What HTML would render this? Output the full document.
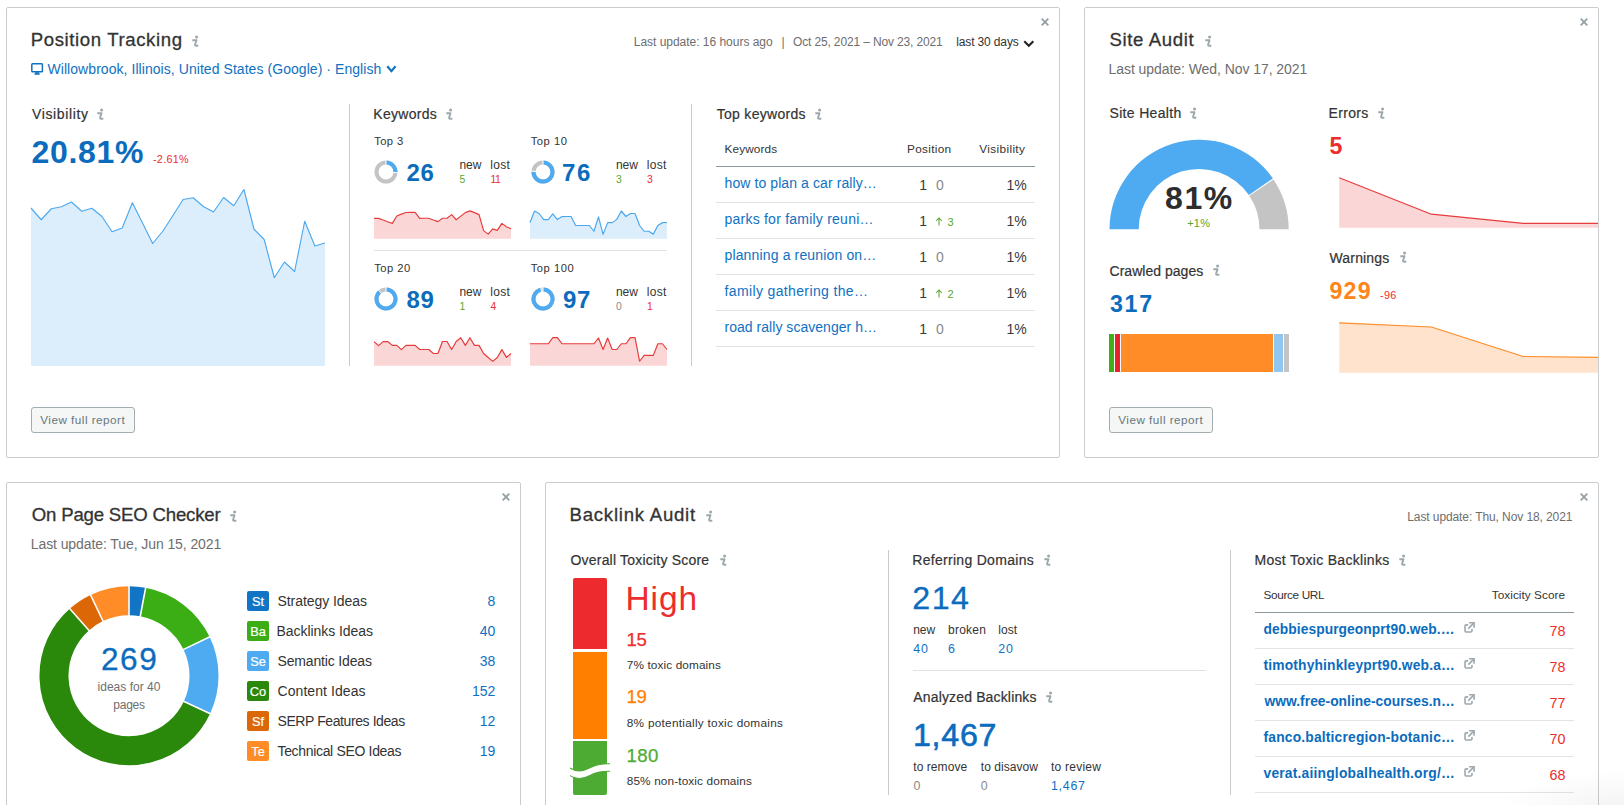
<!DOCTYPE html>
<html lang="en">
<head>
<meta charset="utf-8">
<title>Projects Dashboard</title>
<style>
*{box-sizing:content-box;margin:0;padding:0}
html,body{width:1624px;height:805px;overflow:hidden;background:#fff}
body{font-family:"Liberation Sans",Arial,sans-serif;color:#333;font-size:14px}
.dash{position:relative;width:1624px;height:805px;overflow:hidden}
.card{position:absolute;border:1px solid #cbcccd;border-radius:2px;background:#fff;overflow:hidden}
.card>*{position:absolute}
.t{display:block;white-space:nowrap;line-height:1;font-weight:400}
a.t{text-decoration:none}
h2.t,h3.t{font-weight:400}
svg{display:block;overflow:visible}
.btn{box-sizing:border-box;border:1px solid #a3adb1;border-radius:3px;background:#f5f7f7}
.vdiv{background:#c6cbce}
.hdiv{background:#dde2e5}
.thl{background:#8c979c}
.trl{background:#dfe4e7}
.badge{border-radius:2px}
.fab-shadow{position:absolute;left:1500px;top:770px;width:124px;height:35px;background:radial-gradient(ellipse at 100% 100%,rgba(0,0,0,.045),rgba(0,0,0,0) 70%);pointer-events:none}

</style>
</head>
<body>
<main class="dash">
<section class="card" id="pt" style="left:6px;top:7px;width:1052px;height:449px">
<h2 class="t" style="left:23.75px;top:21px;line-height:21px;font-size:18.6px;letter-spacing:0.604px;-webkit-text-stroke:0.3px currentColor;">Position Tracking</h2>
<svg class="ico info" style="left:185px;top:26.5px" width="8" height="13" viewBox="0 0 8 13"><circle cx="4.6" cy="1.95" r="1.55" fill="#9da8ad"/><path d="M0.3 5.2 H4.5 L3.1 9.5 Q2.8 10.8 4.2 10.8 H6.3" fill="none" stroke="#9da8ad" stroke-width="1.9" stroke-linejoin="round"/></svg>
<svg class="ico" style="left:24px;top:55px" width="13" height="13" viewBox="0 0 13 13"><rect x="0.8" y="0.8" width="10.6" height="8" rx="0.8" fill="#fff" stroke="#1071c2" stroke-width="1.5"/><path d="M4.2 9.2 h3.8 l0.9 2.6 h-5.6z" fill="#1071c2"/></svg>
<a class="t" style="left:40.50px;top:53px;line-height:16px;font-size:14px;color:#1071c2;letter-spacing:0.057px;">Willowbrook, Illinois, United States (Google) · English</a>
<svg class="ico chev" style="left:378.8px;top:57.4px" width="10.8" height="7.8" viewBox="0 0 10.8 7.8"><path d="M1.26 1.26 L5.4 6.225 L9.54 1.26" stroke="#1071c2" stroke-width="2.1" fill="none"/></svg>
<span class="t" style="left:626.75px;top:27px;line-height:14px;font-size:12px;color:#6e6e6e;letter-spacing:-0.022px;">Last update: 16 hours ago</span>
<span class="t" style="left:774.50px;top:27px;line-height:14px;font-size:12px;color:#6e6e6e;">|</span>
<span class="t" style="left:786.00px;top:27px;line-height:14px;font-size:12px;color:#6e6e6e;letter-spacing:-0.145px;">Oct 25, 2021 – Nov 23, 2021</span>
<span class="t" style="left:949.25px;top:27px;line-height:14px;font-size:12px;letter-spacing:-0.140px;">last 30 days</span>
<svg class="ico chev" style="left:1015.6px;top:31.9px" width="11.6" height="7.4" viewBox="0 0 11.6 7.4"><path d="M1.26 1.26 L5.8 5.825 L10.34 1.26" stroke="#222" stroke-width="2.1" fill="none"/></svg>
<svg class="ico close" style="left:1034px;top:10px" width="8" height="8" viewBox="0 0 8 8"><path d="M0.7 0.7 L7.3 7.3 M7.3 0.7 L0.7 7.3" stroke="#939fa5" stroke-width="1.8" fill="none"/></svg>
<h3 class="t" style="left:25.00px;top:98px;line-height:16px;font-size:14px;letter-spacing:0.632px;-webkit-text-stroke:0.2px currentColor;">Visibility</h3>
<svg class="ico info" style="left:90.2px;top:99.7px" width="8" height="13" viewBox="0 0 8 13"><circle cx="4.6" cy="1.95" r="1.55" fill="#9da8ad"/><path d="M0.3 5.2 H4.5 L3.1 9.5 Q2.8 10.8 4.2 10.8 H6.3" fill="none" stroke="#9da8ad" stroke-width="1.9" stroke-linejoin="round"/></svg>
<span class="t" style="left:24.50px;top:126px;line-height:36px;font-size:32px;font-weight:700;color:#0b6cbd;letter-spacing:0.684px;">20.81%</span>
<span class="t" style="left:146.00px;top:145px;line-height:12px;font-size:10.8px;color:#ed2d2d;letter-spacing:0.278px;">-2.61%</span>
<svg class="chart" style="left:24px;top:179px" width="294" height="179" viewBox="0 0 294 179"><polygon points="0.00,179.00 0.00,21.00 10.14,32.75 20.28,21.75 30.41,19.75 40.55,15.00 50.69,24.25 60.83,21.25 70.97,29.50 81.10,44.75 91.24,41.00 101.38,15.75 111.52,36.00 121.66,56.50 131.79,44.25 141.93,28.50 152.07,12.50 162.21,10.75 172.34,19.50 182.48,25.00 192.62,10.50 202.76,18.75 212.90,2.50 223.03,42.25 233.17,52.50 243.31,90.75 253.45,75.00 263.59,84.50 273.72,34.25 283.86,59.00 294.00,56.00 294.00,179.00" fill="#dceefc"/><polyline points="0.00,21.00 10.14,32.75 20.28,21.75 30.41,19.75 40.55,15.00 50.69,24.25 60.83,21.25 70.97,29.50 81.10,44.75 91.24,41.00 101.38,15.75 111.52,36.00 121.66,56.50 131.79,44.25 141.93,28.50 152.07,12.50 162.21,10.75 172.34,19.50 182.48,25.00 192.62,10.50 202.76,18.75 212.90,2.50 223.03,42.25 233.17,52.50 243.31,90.75 253.45,75.00 263.59,84.50 273.72,34.25 283.86,59.00 294.00,56.00" fill="none" stroke="#4ca9ef" stroke-width="1.15" stroke-linejoin="round"/></svg>
<div class="btn" style="left:24px;top:399px;width:104px;height:26px;"></div>
<span class="t" style="left:33.25px;top:405px;line-height:13px;font-size:11.7px;color:#68767c;letter-spacing:0.491px;">View full report</span>
<div class="vdiv" style="left:342px;top:96px;width:1px;height:262px;"></div>
<div class="vdiv" style="left:684px;top:96px;width:1px;height:262px;"></div>
<h3 class="t" style="left:366.25px;top:98px;line-height:16px;font-size:14px;letter-spacing:0.290px;-webkit-text-stroke:0.2px currentColor;">Keywords</h3>
<svg class="ico info" style="left:439px;top:99.7px" width="8" height="13" viewBox="0 0 8 13"><circle cx="4.6" cy="1.95" r="1.55" fill="#9da8ad"/><path d="M0.3 5.2 H4.5 L3.1 9.5 Q2.8 10.8 4.2 10.8 H6.3" fill="none" stroke="#9da8ad" stroke-width="1.9" stroke-linejoin="round"/></svg>
<span class="t" style="left:367.25px;top:127px;line-height:12px;font-size:11.2px;letter-spacing:0.401px;">Top 3</span>
<svg class="donut" style="left:367px;top:151.8px" width="24" height="24" viewBox="0 0 24 24"><circle cx="12" cy="12" r="9.5" fill="none" stroke="#c4c4c4" stroke-width="4"/><path d="M12.00 2.50 A9.5 9.5 0 0 1 21.48 12.60" fill="none" stroke="#4fabf1" stroke-width="4"/><path d="M12 12 L12 0 M12 12 L24.97 12.82" stroke="#fff" stroke-width="1"/></svg>
<span class="t" style="left:399.60px;top:151px;line-height:27px;font-size:24px;font-weight:700;color:#0b6cbd;letter-spacing:0.652px;">26</span>
<span class="t" style="left:452.50px;top:150px;line-height:14px;font-size:12px;letter-spacing:-0.049px;">new</span>
<span class="t" style="left:483.25px;top:150px;line-height:14px;font-size:12px;letter-spacing:0.303px;">lost</span>
<span class="t" style="left:452.50px;top:166px;line-height:11px;font-size:10.4px;color:#59a62c;">5</span>
<span class="t" style="left:483.60px;top:166px;line-height:11px;font-size:10.4px;color:#ed2d2d;letter-spacing:-0.607px;">11</span>
<svg class="spark" style="left:367px;top:200px" width="137" height="31" viewBox="0 0 137 31"><polygon points="0.00,30.75 0.00,10.38 4.57,10.38 9.13,12.00 13.70,13.75 18.27,15.38 22.83,8.00 27.40,6.12 31.97,4.50 36.53,4.38 41.10,4.38 45.67,10.38 50.23,10.25 54.80,10.25 59.37,12.00 63.93,13.62 68.50,10.25 73.07,10.25 77.63,6.62 82.20,11.75 86.77,8.12 91.33,4.62 95.90,2.88 100.47,4.62 105.03,6.62 109.60,22.62 114.17,26.12 118.73,20.88 123.30,22.38 127.87,15.38 132.43,18.75 137.00,20.75 137.00,30.75" fill="#fbd6d6"/><polyline points="0.00,10.38 4.57,10.38 9.13,12.00 13.70,13.75 18.27,15.38 22.83,8.00 27.40,6.12 31.97,4.50 36.53,4.38 41.10,4.38 45.67,10.38 50.23,10.25 54.80,10.25 59.37,12.00 63.93,13.62 68.50,10.25 73.07,10.25 77.63,6.62 82.20,11.75 86.77,8.12 91.33,4.62 95.90,2.88 100.47,4.62 105.03,6.62 109.60,22.62 114.17,26.12 118.73,20.88 123.30,22.38 127.87,15.38 132.43,18.75 137.00,20.75" fill="none" stroke="#e73c3c" stroke-width="1.2" stroke-linejoin="round"/></svg>
<span class="t" style="left:523.75px;top:127px;line-height:12px;font-size:11.2px;letter-spacing:0.527px;">Top 10</span>
<svg class="donut" style="left:523.5px;top:151.8px" width="24" height="24" viewBox="0 0 24 24"><circle cx="12" cy="12" r="9.5" fill="none" stroke="#c4c4c4" stroke-width="4"/><path d="M12.00 2.50 A9.5 9.5 0 1 1 2.52 11.40" fill="none" stroke="#4fabf1" stroke-width="4"/><path d="M12 12 L12 0 M12 12 L-0.97 11.18" stroke="#fff" stroke-width="1"/></svg>
<span class="t" style="left:555.10px;top:151px;line-height:27px;font-size:24px;font-weight:700;color:#0b6cbd;letter-spacing:1.652px;">76</span>
<span class="t" style="left:609.00px;top:150px;line-height:14px;font-size:12px;letter-spacing:-0.049px;">new</span>
<span class="t" style="left:639.75px;top:150px;line-height:14px;font-size:12px;letter-spacing:0.303px;">lost</span>
<span class="t" style="left:609.00px;top:166px;line-height:11px;font-size:10.4px;color:#59a62c;">3</span>
<span class="t" style="left:640.10px;top:166px;line-height:11px;font-size:10.4px;color:#ed2d2d;">3</span>
<svg class="spark" style="left:523px;top:201px" width="137" height="30" viewBox="0 0 137 30"><polygon points="0.00,29.75 0.00,13.50 4.57,2.00 9.13,4.50 13.70,10.62 18.27,10.62 22.83,4.88 27.40,10.62 31.97,7.62 36.53,7.50 41.10,7.50 45.67,16.50 50.23,16.50 54.80,16.50 59.37,16.50 63.93,22.25 68.50,7.88 73.07,25.38 77.63,13.62 82.20,13.62 86.77,10.38 91.33,2.00 95.90,7.50 100.47,4.50 105.03,4.50 109.60,16.50 114.17,22.25 118.73,22.25 123.30,25.12 127.87,16.50 132.43,13.62 137.00,13.50 137.00,29.75" fill="#dceefc"/><polyline points="0.00,13.50 4.57,2.00 9.13,4.50 13.70,10.62 18.27,10.62 22.83,4.88 27.40,10.62 31.97,7.62 36.53,7.50 41.10,7.50 45.67,16.50 50.23,16.50 54.80,16.50 59.37,16.50 63.93,22.25 68.50,7.88 73.07,25.38 77.63,13.62 82.20,13.62 86.77,10.38 91.33,2.00 95.90,7.50 100.47,4.50 105.03,4.50 109.60,16.50 114.17,22.25 118.73,22.25 123.30,25.12 127.87,16.50 132.43,13.62 137.00,13.50" fill="none" stroke="#4ca9ef" stroke-width="1.2" stroke-linejoin="round"/></svg>
<span class="t" style="left:367.25px;top:254px;line-height:12px;font-size:11.2px;letter-spacing:0.477px;">Top 20</span>
<svg class="donut" style="left:367px;top:278.8px" width="24" height="24" viewBox="0 0 24 24"><circle cx="12" cy="12" r="9.5" fill="none" stroke="#c4c4c4" stroke-width="4"/><path d="M12.00 2.50 A9.5 9.5 0 1 1 5.94 4.68" fill="none" stroke="#4fabf1" stroke-width="4"/><path d="M12 12 L12 0 M12 12 L3.71 1.98" stroke="#fff" stroke-width="1"/></svg>
<span class="t" style="left:399.60px;top:278px;line-height:27px;font-size:24px;font-weight:700;color:#0b6cbd;letter-spacing:0.652px;">89</span>
<span class="t" style="left:452.50px;top:277px;line-height:14px;font-size:12px;letter-spacing:-0.049px;">new</span>
<span class="t" style="left:483.25px;top:277px;line-height:14px;font-size:12px;letter-spacing:0.303px;">lost</span>
<span class="t" style="left:452.50px;top:293px;line-height:11px;font-size:10.4px;color:#59a62c;">1</span>
<span class="t" style="left:483.60px;top:293px;line-height:11px;font-size:10.4px;color:#ed2d2d;">4</span>
<svg class="spark" style="left:367px;top:327px" width="137" height="31" viewBox="0 0 137 31"><polygon points="0.00,30.75 0.00,6.62 4.57,10.62 9.13,6.62 13.70,6.50 18.27,10.38 22.83,10.38 27.40,14.62 31.97,10.38 36.53,10.38 41.10,10.38 45.67,14.50 50.23,14.50 54.80,14.50 59.37,18.50 63.93,18.50 68.50,6.50 73.07,6.50 77.63,14.50 82.20,6.50 86.77,2.75 91.33,10.38 95.90,2.75 100.47,10.38 105.03,10.38 109.60,18.50 114.17,22.50 118.73,26.38 123.30,22.50 127.87,14.62 132.43,22.38 137.00,18.50 137.00,30.75" fill="#fbd6d6"/><polyline points="0.00,6.62 4.57,10.62 9.13,6.62 13.70,6.50 18.27,10.38 22.83,10.38 27.40,14.62 31.97,10.38 36.53,10.38 41.10,10.38 45.67,14.50 50.23,14.50 54.80,14.50 59.37,18.50 63.93,18.50 68.50,6.50 73.07,6.50 77.63,14.50 82.20,6.50 86.77,2.75 91.33,10.38 95.90,2.75 100.47,10.38 105.03,10.38 109.60,18.50 114.17,22.50 118.73,26.38 123.30,22.50 127.87,14.62 132.43,22.38 137.00,18.50" fill="none" stroke="#e73c3c" stroke-width="1.2" stroke-linejoin="round"/></svg>
<span class="t" style="left:523.75px;top:254px;line-height:12px;font-size:11.2px;letter-spacing:0.527px;">Top 100</span>
<svg class="donut" style="left:523.5px;top:278.8px" width="24" height="24" viewBox="0 0 24 24"><circle cx="12" cy="12" r="9.5" fill="none" stroke="#c4c4c4" stroke-width="4"/><path d="M12.00 2.50 A9.5 9.5 0 1 1 10.22 2.67" fill="none" stroke="#4fabf1" stroke-width="4"/><path d="M12 12 L12 0 M12 12 L9.56 -0.77" stroke="#fff" stroke-width="1"/></svg>
<span class="t" style="left:556.10px;top:278px;line-height:27px;font-size:24px;font-weight:700;color:#0b6cbd;letter-spacing:0.652px;">97</span>
<span class="t" style="left:609.00px;top:277px;line-height:14px;font-size:12px;letter-spacing:-0.049px;">new</span>
<span class="t" style="left:639.75px;top:277px;line-height:14px;font-size:12px;letter-spacing:0.303px;">lost</span>
<span class="t" style="left:609.00px;top:293px;line-height:11px;font-size:10.4px;color:#8a8a8a;">0</span>
<span class="t" style="left:640.10px;top:293px;line-height:11px;font-size:10.4px;color:#ed2d2d;">1</span>
<svg class="spark" style="left:523px;top:327px" width="137" height="31" viewBox="0 0 137 31"><polygon points="0.00,30.75 0.00,8.75 4.57,8.75 9.13,8.75 13.70,8.75 18.27,8.75 22.83,2.62 27.40,2.62 31.97,8.75 36.53,8.75 41.10,8.75 45.67,8.75 50.23,8.75 54.80,8.75 59.37,8.75 63.93,8.75 68.50,3.00 73.07,14.50 77.63,3.00 82.20,14.50 86.77,14.50 91.33,8.75 95.90,8.75 100.47,2.62 105.03,2.62 109.60,26.25 114.17,20.38 118.73,20.38 123.30,20.38 127.87,8.75 132.43,8.75 137.00,14.50 137.00,30.75" fill="#fbd6d6"/><polyline points="0.00,8.75 4.57,8.75 9.13,8.75 13.70,8.75 18.27,8.75 22.83,2.62 27.40,2.62 31.97,8.75 36.53,8.75 41.10,8.75 45.67,8.75 50.23,8.75 54.80,8.75 59.37,8.75 63.93,8.75 68.50,3.00 73.07,14.50 77.63,3.00 82.20,14.50 86.77,14.50 91.33,8.75 95.90,8.75 100.47,2.62 105.03,2.62 109.60,26.25 114.17,20.38 118.73,20.38 123.30,20.38 127.87,8.75 132.43,8.75 137.00,14.50" fill="none" stroke="#e73c3c" stroke-width="1.2" stroke-linejoin="round"/></svg>
<div class="hdiv" style="left:367px;top:242px;width:293px;height:1px;"></div>
<h3 class="t" style="left:709.75px;top:98px;line-height:16px;font-size:14px;letter-spacing:0.287px;-webkit-text-stroke:0.2px currentColor;">Top keywords</h3>
<svg class="ico info" style="left:808px;top:99.7px" width="8" height="13" viewBox="0 0 8 13"><circle cx="4.6" cy="1.95" r="1.55" fill="#9da8ad"/><path d="M0.3 5.2 H4.5 L3.1 9.5 Q2.8 10.8 4.2 10.8 H6.3" fill="none" stroke="#9da8ad" stroke-width="1.9" stroke-linejoin="round"/></svg>
<span class="t" style="left:717.50px;top:134px;line-height:14px;font-size:11.8px;letter-spacing:0.122px;">Keywords</span>
<span class="t" style="left:900.00px;top:134px;line-height:14px;font-size:11.8px;letter-spacing:0.299px;">Position</span>
<span class="t" style="left:972.25px;top:134px;line-height:14px;font-size:11.8px;letter-spacing:0.361px;">Visibility</span>
<div class="thl" style="left:709px;top:158px;width:319px;height:1px;"></div>
<a class="t" style="left:717.50px;top:167px;line-height:16px;font-size:14px;color:#1071c2;letter-spacing:0.090px;">how to plan a car rally…</a>
<span class="t" style="left:912.30px;top:169px;line-height:16px;font-size:14px;color:#3a3a3a;">1</span>
<span class="t" style="left:928.90px;top:169px;line-height:16px;font-size:14px;color:#8a8a8a;">0</span>
<span class="t" style="left:999.46px;top:169px;line-height:16px;font-size:14px;color:#3a3a3a;">1%</span>
<div class="trl" style="left:709px;top:194px;width:319px;height:1px;"></div>
<a class="t" style="left:717.50px;top:203px;line-height:16px;font-size:14px;color:#1071c2;letter-spacing:0.230px;">parks for family reuni…</a>
<span class="t" style="left:912.30px;top:205px;line-height:16px;font-size:14px;color:#3a3a3a;">1</span>
<svg class="ico" style="left:928.3px;top:208.9px" width="8" height="9" viewBox="0 0 8 9"><path d="M4 8.6 V1.2 M1 4 L4 1 L7 4" fill="none" stroke="#59a62c" stroke-width="1.05"/></svg>
<span class="t" style="left:940.40px;top:208px;line-height:12px;font-size:11px;color:#59a62c;">3</span>
<span class="t" style="left:999.46px;top:205px;line-height:16px;font-size:14px;color:#3a3a3a;">1%</span>
<div class="trl" style="left:709px;top:230px;width:319px;height:1px;"></div>
<a class="t" style="left:717.50px;top:239px;line-height:16px;font-size:14px;color:#1071c2;letter-spacing:0.147px;">planning a reunion on…</a>
<span class="t" style="left:912.30px;top:241px;line-height:16px;font-size:14px;color:#3a3a3a;">1</span>
<span class="t" style="left:928.90px;top:241px;line-height:16px;font-size:14px;color:#8a8a8a;">0</span>
<span class="t" style="left:999.46px;top:241px;line-height:16px;font-size:14px;color:#3a3a3a;">1%</span>
<div class="trl" style="left:709px;top:266px;width:319px;height:1px;"></div>
<a class="t" style="left:717.50px;top:275px;line-height:16px;font-size:14px;color:#1071c2;letter-spacing:0.366px;">family gathering the…</a>
<span class="t" style="left:912.30px;top:277px;line-height:16px;font-size:14px;color:#3a3a3a;">1</span>
<svg class="ico" style="left:928.3px;top:280.9px" width="8" height="9" viewBox="0 0 8 9"><path d="M4 8.6 V1.2 M1 4 L4 1 L7 4" fill="none" stroke="#59a62c" stroke-width="1.05"/></svg>
<span class="t" style="left:940.40px;top:280px;line-height:12px;font-size:11px;color:#59a62c;">2</span>
<span class="t" style="left:999.46px;top:277px;line-height:16px;font-size:14px;color:#3a3a3a;">1%</span>
<div class="trl" style="left:709px;top:302px;width:319px;height:1px;"></div>
<a class="t" style="left:717.50px;top:311px;line-height:16px;font-size:14px;color:#1071c2;letter-spacing:0.035px;">road rally scavenger h…</a>
<span class="t" style="left:912.30px;top:313px;line-height:16px;font-size:14px;color:#3a3a3a;">1</span>
<span class="t" style="left:928.90px;top:313px;line-height:16px;font-size:14px;color:#8a8a8a;">0</span>
<span class="t" style="left:999.46px;top:313px;line-height:16px;font-size:14px;color:#3a3a3a;">1%</span>
<div class="trl" style="left:709px;top:338px;width:319px;height:1px;"></div>
</section>
<section class="card" id="sa" style="left:1084px;top:7px;width:513px;height:449px">
<h2 class="t" style="left:24.50px;top:21px;line-height:21px;font-size:18.6px;letter-spacing:0.620px;-webkit-text-stroke:0.3px currentColor;">Site Audit</h2>
<svg class="ico info" style="left:120px;top:26.5px" width="8" height="13" viewBox="0 0 8 13"><circle cx="4.6" cy="1.95" r="1.55" fill="#9da8ad"/><path d="M0.3 5.2 H4.5 L3.1 9.5 Q2.8 10.8 4.2 10.8 H6.3" fill="none" stroke="#9da8ad" stroke-width="1.9" stroke-linejoin="round"/></svg>
<svg class="ico close" style="left:495px;top:10px" width="8" height="8" viewBox="0 0 8 8"><path d="M0.7 0.7 L7.3 7.3 M7.3 0.7 L0.7 7.3" stroke="#939fa5" stroke-width="1.8" fill="none"/></svg>
<span class="t" style="left:23.50px;top:53px;line-height:16px;font-size:14px;color:#6e6e6e;letter-spacing:-0.061px;">Last update: Wed, Nov 17, 2021</span>
<h3 class="t" style="left:24.50px;top:97px;line-height:16px;font-size:14px;letter-spacing:0.330px;-webkit-text-stroke:0.2px currentColor;">Site Health</h3>
<svg class="ico info" style="left:105px;top:98.5px" width="8" height="13" viewBox="0 0 8 13"><circle cx="4.6" cy="1.95" r="1.55" fill="#9da8ad"/><path d="M0.3 5.2 H4.5 L3.1 9.5 Q2.8 10.8 4.2 10.8 H6.3" fill="none" stroke="#9da8ad" stroke-width="1.9" stroke-linejoin="round"/></svg>
<h3 class="t" style="left:243.50px;top:97px;line-height:16px;font-size:14px;letter-spacing:0.328px;-webkit-text-stroke:0.2px currentColor;">Errors</h3>
<svg class="ico info" style="left:293px;top:98.5px" width="8" height="13" viewBox="0 0 8 13"><circle cx="4.6" cy="1.95" r="1.55" fill="#9da8ad"/><path d="M0.3 5.2 H4.5 L3.1 9.5 Q2.8 10.8 4.2 10.8 H6.3" fill="none" stroke="#9da8ad" stroke-width="1.9" stroke-linejoin="round"/></svg>
<span class="t" style="left:244.50px;top:125px;line-height:26px;font-size:23.2px;font-weight:700;color:#ed2d2d;">5</span>
<svg class="gauge" style="left:24px;top:131px" width="182" height="92" viewBox="0 0 182 92"><path d="M0.50 90.30 A89.6 89.6 0 0 1 163.90 39.49 L139.85 56.05 A60.4 60.4 0 0 0 29.70 90.30Z" fill="#4fabf1"/><path d="M164.51 40.39 A89.6 89.6 0 0 1 179.70 90.30 L150.50 90.30 A60.4 60.4 0 0 0 140.26 56.66Z" fill="#c4c4c4"/></svg>
<span class="t" style="left:80.00px;top:172px;line-height:36px;font-size:32px;font-weight:700;color:#2d2d2d;letter-spacing:1.603px;">81%</span>
<span class="t" style="left:102.20px;top:209px;line-height:12px;font-size:11px;color:#59a62c;letter-spacing:0.229px;">+1%</span>
<svg class="chart" style="left:254px;top:167px" width="277" height="53" viewBox="0 0 277 53"><polygon points="0.25,52.75 0.25,2.70 92.40,39.20 184.20,48.30 276.50,48.30 276.50,52.75" fill="#fbd6d6"/><polyline points="0.25,2.70 92.40,39.20 184.20,48.30 276.50,48.30" fill="none" stroke="#e73c3c" stroke-width="1.2" stroke-linejoin="round"/></svg>
<h3 class="t" style="left:244.50px;top:242px;line-height:16px;font-size:14px;letter-spacing:0.163px;-webkit-text-stroke:0.2px currentColor;">Warnings</h3>
<svg class="ico info" style="left:314.5px;top:243px" width="8" height="13" viewBox="0 0 8 13"><circle cx="4.6" cy="1.95" r="1.55" fill="#9da8ad"/><path d="M0.3 5.2 H4.5 L3.1 9.5 Q2.8 10.8 4.2 10.8 H6.3" fill="none" stroke="#9da8ad" stroke-width="1.9" stroke-linejoin="round"/></svg>
<span class="t" style="left:244.50px;top:270px;line-height:26px;font-size:23.2px;font-weight:700;color:#ff8419;letter-spacing:1.229px;">929</span>
<span class="t" style="left:295.00px;top:281px;line-height:12px;font-size:10.8px;color:#ed2d2d;letter-spacing:0.325px;">-96</span>
<svg class="chart" style="left:254px;top:312px" width="277" height="53" viewBox="0 0 277 53"><polygon points="0.25,52.70 0.25,2.80 92.40,7.00 184.20,36.50 276.50,37.70 276.50,52.70" fill="#ffe3cc"/><polyline points="0.25,2.80 92.40,7.00 184.20,36.50 276.50,37.70" fill="none" stroke="#ff8c27" stroke-width="1.2" stroke-linejoin="round"/></svg>
<h3 class="t" style="left:24.50px;top:255px;line-height:16px;font-size:14px;letter-spacing:0.030px;-webkit-text-stroke:0.2px currentColor;">Crawled pages</h3>
<svg class="ico info" style="left:128px;top:256px" width="8" height="13" viewBox="0 0 8 13"><circle cx="4.6" cy="1.95" r="1.55" fill="#9da8ad"/><path d="M0.3 5.2 H4.5 L3.1 9.5 Q2.8 10.8 4.2 10.8 H6.3" fill="none" stroke="#9da8ad" stroke-width="1.9" stroke-linejoin="round"/></svg>
<span class="t" style="left:25.00px;top:283px;line-height:26px;font-size:23.2px;font-weight:700;color:#0b6cbd;letter-spacing:1.729px;">317</span>
<div class="seg" style="left:24px;top:326px;width:5px;height:38px;background:#3fae17"></div>
<div class="seg" style="left:30px;top:326px;width:5px;height:38px;background:#e8222a"></div>
<div class="seg" style="left:36.25px;top:326px;width:151.75px;height:38px;background:#ff8c27"></div>
<div class="seg" style="left:189px;top:326px;width:9px;height:38px;background:#90c6f0"></div>
<div class="seg" style="left:199px;top:326px;width:5.25px;height:38px;background:#c4c4c4"></div>
<div class="btn" style="left:24px;top:399px;width:104px;height:26px;"></div>
<span class="t" style="left:33.25px;top:405px;line-height:13px;font-size:11.7px;color:#68767c;letter-spacing:0.491px;">View full report</span>
</section>
<section class="card" id="op" style="left:6px;top:482px;width:513px;height:338px">
<h2 class="t" style="left:24.75px;top:21px;line-height:21px;font-size:18.6px;letter-spacing:-0.183px;-webkit-text-stroke:0.3px currentColor;">On Page SEO Checker</h2>
<svg class="ico info" style="left:223px;top:26.5px" width="8" height="13" viewBox="0 0 8 13"><circle cx="4.6" cy="1.95" r="1.55" fill="#9da8ad"/><path d="M0.3 5.2 H4.5 L3.1 9.5 Q2.8 10.8 4.2 10.8 H6.3" fill="none" stroke="#9da8ad" stroke-width="1.9" stroke-linejoin="round"/></svg>
<svg class="ico close" style="left:495px;top:10px" width="8" height="8" viewBox="0 0 8 8"><path d="M0.7 0.7 L7.3 7.3 M7.3 0.7 L0.7 7.3" stroke="#939fa5" stroke-width="1.8" fill="none"/></svg>
<span class="t" style="left:23.75px;top:53px;line-height:16px;font-size:14px;color:#6e6e6e;letter-spacing:-0.086px;">Last update: Tue, Jun 15, 2021</span>
<svg class="pie" style="left:31px;top:102px" width="182" height="182" viewBox="0 0 182 182"><path d="M91.00 15.75 A75 75 0 0 1 104.93 17.06" fill="none" stroke="#1274c4" stroke-width="29"/><path d="M104.93 17.06 A75 75 0 0 1 158.55 58.15" fill="none" stroke="#3aae14" stroke-width="29"/><path d="M158.55 58.15 A75 75 0 0 1 158.92 122.56" fill="none" stroke="#4fabf1" stroke-width="29"/><path d="M158.92 122.56 A75 75 0 1 1 41.32 34.57" fill="none" stroke="#2a890a" stroke-width="29"/><path d="M41.32 34.57 A75 75 0 0 1 58.80 23.02" fill="none" stroke="#dc6707" stroke-width="29"/><path d="M58.80 23.02 A75 75 0 0 1 91.00 15.75" fill="none" stroke="#ff8c27" stroke-width="29"/><line x1="91.00" y1="31.75" x2="91.00" y2="-0.25" stroke="#fff" stroke-width="1.6"/><line x1="101.96" y1="32.78" x2="107.91" y2="1.33" stroke="#fff" stroke-width="1.6"/><line x1="144.14" y1="65.11" x2="172.96" y2="51.20" stroke="#fff" stroke-width="1.6"/><line x1="144.43" y1="115.77" x2="173.41" y2="129.34" stroke="#fff" stroke-width="1.6"/><line x1="51.92" y1="46.55" x2="30.72" y2="22.58" stroke="#fff" stroke-width="1.6"/><line x1="65.67" y1="37.47" x2="51.93" y2="8.57" stroke="#fff" stroke-width="1.6"/></svg>
<span class="t" style="left:94.00px;top:158px;line-height:36px;font-size:31.6px;color:#0b6cbd;letter-spacing:1.554px;-webkit-text-stroke:0.3px currentColor;">269</span>
<span class="t" style="left:90.50px;top:197px;line-height:14px;font-size:12px;color:#6e6e6e;letter-spacing:0.020px;">ideas for 40</span>
<span class="t" style="left:106.25px;top:215px;line-height:14px;font-size:12px;color:#6e6e6e;letter-spacing:-0.236px;">pages</span>
<div class="badge" style="left:240px;top:108px;width:22px;height:20px;background:#1274c4"></div>
<span class="t bt" style="left:240.00px;top:111px;line-height:15px;font-size:12.8px;color:#fff;-webkit-text-stroke:0.2px currentColor;width:22px;text-align:center;">St</span>
<span class="t" style="left:270.50px;top:110px;line-height:16px;font-size:14px;letter-spacing:-0.060px;">Strategy Ideas</span>
<span class="t" style="left:480.50px;top:110px;line-height:16px;font-size:14px;color:#1071c2;">8</span>
<div class="badge" style="left:240px;top:138px;width:22px;height:20px;background:#3aae14"></div>
<span class="t bt" style="left:240.00px;top:141px;line-height:15px;font-size:12.8px;color:#fff;-webkit-text-stroke:0.2px currentColor;width:22px;text-align:center;">Ba</span>
<span class="t" style="left:269.50px;top:140px;line-height:16px;font-size:14px;letter-spacing:-0.055px;">Backlinks Ideas</span>
<span class="t" style="left:472.71px;top:140px;line-height:16px;font-size:14px;color:#1071c2;">40</span>
<div class="badge" style="left:240px;top:168px;width:22px;height:20px;background:#4fabf1"></div>
<span class="t bt" style="left:240.00px;top:171px;line-height:15px;font-size:12.8px;color:#fff;-webkit-text-stroke:0.2px currentColor;width:22px;text-align:center;">Se</span>
<span class="t" style="left:270.50px;top:170px;line-height:16px;font-size:14px;letter-spacing:-0.154px;">Semantic Ideas</span>
<span class="t" style="left:472.71px;top:170px;line-height:16px;font-size:14px;color:#1071c2;">38</span>
<div class="badge" style="left:240px;top:198px;width:22px;height:20px;background:#2a890a"></div>
<span class="t bt" style="left:240.00px;top:201px;line-height:15px;font-size:12.8px;color:#fff;-webkit-text-stroke:0.2px currentColor;width:22px;text-align:center;">Co</span>
<span class="t" style="left:270.50px;top:200px;line-height:16px;font-size:14px;letter-spacing:0.069px;">Content Ideas</span>
<span class="t" style="left:464.93px;top:200px;line-height:16px;font-size:14px;color:#1071c2;">152</span>
<div class="badge" style="left:240px;top:228px;width:22px;height:20px;background:#dc6707"></div>
<span class="t bt" style="left:240.00px;top:231px;line-height:15px;font-size:12.8px;color:#fff;-webkit-text-stroke:0.2px currentColor;width:22px;text-align:center;">Sf</span>
<span class="t" style="left:270.50px;top:230px;line-height:16px;font-size:14px;letter-spacing:-0.411px;">SERP Features Ideas</span>
<span class="t" style="left:472.71px;top:230px;line-height:16px;font-size:14px;color:#1071c2;">12</span>
<div class="badge" style="left:240px;top:258px;width:22px;height:20px;background:#ff8c27"></div>
<span class="t bt" style="left:240.00px;top:261px;line-height:15px;font-size:12.8px;color:#fff;-webkit-text-stroke:0.2px currentColor;width:22px;text-align:center;">Te</span>
<span class="t" style="left:270.50px;top:260px;line-height:16px;font-size:14px;letter-spacing:-0.331px;">Technical SEO Ideas</span>
<span class="t" style="left:472.71px;top:260px;line-height:16px;font-size:14px;color:#1071c2;">19</span>
</section>
<section class="card" id="ba" style="left:545px;top:482px;width:1052px;height:338px">
<h2 class="t" style="left:23.50px;top:21px;line-height:21px;font-size:18.6px;letter-spacing:0.760px;-webkit-text-stroke:0.3px currentColor;">Backlink Audit</h2>
<svg class="ico info" style="left:160.25px;top:26.5px" width="8" height="13" viewBox="0 0 8 13"><circle cx="4.6" cy="1.95" r="1.55" fill="#9da8ad"/><path d="M0.3 5.2 H4.5 L3.1 9.5 Q2.8 10.8 4.2 10.8 H6.3" fill="none" stroke="#9da8ad" stroke-width="1.9" stroke-linejoin="round"/></svg>
<svg class="ico close" style="left:1034px;top:10px" width="8" height="8" viewBox="0 0 8 8"><path d="M0.7 0.7 L7.3 7.3 M7.3 0.7 L0.7 7.3" stroke="#939fa5" stroke-width="1.8" fill="none"/></svg>
<span class="t" style="left:861.25px;top:27px;line-height:14px;font-size:12px;color:#6e6e6e;letter-spacing:-0.093px;">Last update: Thu, Nov 18, 2021</span>
<h3 class="t" style="left:24.50px;top:69px;line-height:16px;font-size:14px;letter-spacing:0.200px;-webkit-text-stroke:0.2px currentColor;">Overall Toxicity Score</h3>
<svg class="ico info" style="left:173.5px;top:70.5px" width="8" height="13" viewBox="0 0 8 13"><circle cx="4.6" cy="1.95" r="1.55" fill="#9da8ad"/><path d="M0.3 5.2 H4.5 L3.1 9.5 Q2.8 10.8 4.2 10.8 H6.3" fill="none" stroke="#9da8ad" stroke-width="1.9" stroke-linejoin="round"/></svg>
<div class="seg" style="left:27px;top:95px;width:34px;height:71px;background:#ed2b2e;border-radius:2px 2px 0 0"></div>
<div class="seg" style="left:27px;top:168.5px;width:34px;height:87px;background:#ff8000"></div>
<div class="seg" style="left:27px;top:258px;width:34px;height:53.5px;background:#4dab33;border-radius:0 0 2px 2px"></div>
<svg class="brk" style="left:22px;top:275px" width="44" height="24" viewBox="0 0 44 24"><path d="M2 10 C8 14 15 13.5 22 9.8 C29 6 35 5.5 42 5.7 L42 13.3 C35 13.1 29 13.6 22 17.4 C15 21.1 8 21.6 2 17.6Z" fill="#fff"/><path d="M2 10 C8 14 15 13.5 22 9.8 C29 6 35 5.5 42 5.7" fill="none" stroke="#4dab33" stroke-width="1.1"/><path d="M2 17.6 C8 21.6 15 21.1 22 17.4 C29 13.6 35 13.1 42 13.3" fill="none" stroke="#4dab33" stroke-width="1.1"/></svg>
<span class="t" style="left:79.50px;top:97px;line-height:37px;font-size:33.5px;color:#ed2d2d;letter-spacing:0.911px;">High</span>
<span class="t" style="left:80.50px;top:146px;line-height:21px;font-size:18.6px;color:#ed2d2d;letter-spacing:-0.341px;-webkit-text-stroke:0.25px currentColor;">15</span>
<span class="t" style="left:80.75px;top:175px;line-height:14px;font-size:11.8px;letter-spacing:0.113px;">7% toxic domains</span>
<span class="t" style="left:80.50px;top:203px;line-height:21px;font-size:18.6px;color:#ff8000;letter-spacing:-0.341px;-webkit-text-stroke:0.25px currentColor;">19</span>
<span class="t" style="left:80.75px;top:233px;line-height:14px;font-size:11.8px;letter-spacing:0.270px;">8% potentially toxic domains</span>
<span class="t" style="left:80.50px;top:262px;line-height:21px;font-size:18.6px;color:#4dab33;letter-spacing:0.409px;-webkit-text-stroke:0.25px currentColor;">180</span>
<span class="t" style="left:80.75px;top:291px;line-height:14px;font-size:11.8px;letter-spacing:0.126px;">85% non-toxic domains</span>
<div class="vdiv" style="left:342px;top:67px;width:1px;height:244.5px;"></div>
<div class="vdiv" style="left:684px;top:67px;width:1px;height:244.5px;"></div>
<h3 class="t" style="left:366.25px;top:69px;line-height:16px;font-size:14px;letter-spacing:0.299px;-webkit-text-stroke:0.2px currentColor;">Referring Domains</h3>
<svg class="ico info" style="left:497.75px;top:70.5px" width="8" height="13" viewBox="0 0 8 13"><circle cx="4.6" cy="1.95" r="1.55" fill="#9da8ad"/><path d="M0.3 5.2 H4.5 L3.1 9.5 Q2.8 10.8 4.2 10.8 H6.3" fill="none" stroke="#9da8ad" stroke-width="1.9" stroke-linejoin="round"/></svg>
<span class="t" style="left:366.25px;top:97px;line-height:36px;font-size:32.2px;color:#0b6cbd;letter-spacing:1.474px;-webkit-text-stroke:0.3px currentColor;">214</span>
<span class="t" style="left:367.25px;top:140px;line-height:14px;font-size:12px;letter-spacing:-0.049px;">new</span>
<span class="t" style="left:402.00px;top:140px;line-height:14px;font-size:12px;letter-spacing:0.246px;">broken</span>
<span class="t" style="left:452.25px;top:140px;line-height:14px;font-size:12px;letter-spacing:0.053px;">lost</span>
<span class="t" style="left:367.25px;top:159px;line-height:14px;font-size:12.4px;color:#1071c2;letter-spacing:0.859px;">40</span>
<span class="t" style="left:402.00px;top:159px;line-height:14px;font-size:12.4px;color:#1071c2;">6</span>
<span class="t" style="left:452.25px;top:159px;line-height:14px;font-size:12.4px;color:#1071c2;letter-spacing:0.859px;">20</span>
<div class="hdiv" style="left:367px;top:187px;width:293px;height:1px;"></div>
<h3 class="t" style="left:367.25px;top:206px;line-height:16px;font-size:14px;letter-spacing:0.155px;-webkit-text-stroke:0.2px currentColor;">Analyzed Backlinks</h3>
<svg class="ico info" style="left:500px;top:207.5px" width="8" height="13" viewBox="0 0 8 13"><circle cx="4.6" cy="1.95" r="1.55" fill="#9da8ad"/><path d="M0.3 5.2 H4.5 L3.1 9.5 Q2.8 10.8 4.2 10.8 H6.3" fill="none" stroke="#9da8ad" stroke-width="1.9" stroke-linejoin="round"/></svg>
<span class="t" style="left:367.00px;top:234px;line-height:36px;font-size:32.2px;color:#0b6cbd;letter-spacing:0.713px;-webkit-text-stroke:0.6px currentColor;">1,467</span>
<span class="t" style="left:367.25px;top:277px;line-height:14px;font-size:12px;letter-spacing:0.071px;">to remove</span>
<span class="t" style="left:434.75px;top:277px;line-height:14px;font-size:12px;letter-spacing:0.052px;">to disavow</span>
<span class="t" style="left:505.00px;top:277px;line-height:14px;font-size:12px;letter-spacing:0.237px;">to review</span>
<span class="t" style="left:367.50px;top:296px;line-height:14px;font-size:12.4px;color:#8a8a8a;">0</span>
<span class="t" style="left:434.75px;top:296px;line-height:14px;font-size:12.4px;color:#8a8a8a;">0</span>
<span class="t" style="left:505.00px;top:296px;line-height:14px;font-size:12.4px;color:#1071c2;letter-spacing:0.721px;">1,467</span>
<h3 class="t" style="left:708.50px;top:69px;line-height:16px;font-size:14px;letter-spacing:0.308px;-webkit-text-stroke:0.2px currentColor;">Most Toxic Backlinks</h3>
<svg class="ico info" style="left:853.25px;top:70.5px" width="8" height="13" viewBox="0 0 8 13"><circle cx="4.6" cy="1.95" r="1.55" fill="#9da8ad"/><path d="M0.3 5.2 H4.5 L3.1 9.5 Q2.8 10.8 4.2 10.8 H6.3" fill="none" stroke="#9da8ad" stroke-width="1.9" stroke-linejoin="round"/></svg>
<span class="t" style="left:717.50px;top:105px;line-height:14px;font-size:11.8px;letter-spacing:-0.355px;">Source URL</span>
<span class="t" style="left:945.75px;top:105px;line-height:14px;font-size:11.8px;letter-spacing:0.042px;">Toxicity Score</span>
<div class="thl" style="left:709px;top:129px;width:319px;height:1px;"></div>
<a class="t" style="left:717.50px;top:139px;line-height:15px;font-size:13.8px;font-weight:700;color:#0b6cbd;letter-spacing:0.071px;">debbiespurgeonprt90.web.…</a>
<svg class="ico ext" style="left:918px;top:139px" width="12" height="12" viewBox="0 0 12 12"><g fill="none" stroke="#9da8ad" stroke-width="1.6"><path d="M4.1 2.9 H2.3 Q1 2.9 1 4.2 V8.7 Q1 10 2.3 10 H6.7 Q8 10 8 8.7 V7.1"/><path d="M5.1 0.8 H10.1 V5.8"/><path d="M10 0.9 L4.3 6.6"/></g></svg>
<span class="t" style="left:1003.55px;top:140px;line-height:16px;font-size:14.3px;color:#ed2d2d;">78</span>
<div class="trl" style="left:709px;top:165px;width:319px;height:1px;"></div>
<a class="t" style="left:717.50px;top:175px;line-height:15px;font-size:13.8px;font-weight:700;color:#0b6cbd;letter-spacing:0.169px;">timothyhinkleyprt90.web.a…</a>
<svg class="ico ext" style="left:918px;top:175px" width="12" height="12" viewBox="0 0 12 12"><g fill="none" stroke="#9da8ad" stroke-width="1.6"><path d="M4.1 2.9 H2.3 Q1 2.9 1 4.2 V8.7 Q1 10 2.3 10 H6.7 Q8 10 8 8.7 V7.1"/><path d="M5.1 0.8 H10.1 V5.8"/><path d="M10 0.9 L4.3 6.6"/></g></svg>
<span class="t" style="left:1003.55px;top:176px;line-height:16px;font-size:14.3px;color:#ed2d2d;">78</span>
<div class="trl" style="left:709px;top:201px;width:319px;height:1px;"></div>
<a class="t" style="left:718.50px;top:211px;line-height:15px;font-size:13.8px;font-weight:700;color:#0b6cbd;letter-spacing:0.027px;">www.free-online-courses.n…</a>
<svg class="ico ext" style="left:918px;top:211px" width="12" height="12" viewBox="0 0 12 12"><g fill="none" stroke="#9da8ad" stroke-width="1.6"><path d="M4.1 2.9 H2.3 Q1 2.9 1 4.2 V8.7 Q1 10 2.3 10 H6.7 Q8 10 8 8.7 V7.1"/><path d="M5.1 0.8 H10.1 V5.8"/><path d="M10 0.9 L4.3 6.6"/></g></svg>
<span class="t" style="left:1003.55px;top:212px;line-height:16px;font-size:14.3px;color:#ed2d2d;">77</span>
<div class="trl" style="left:709px;top:237px;width:319px;height:1px;"></div>
<a class="t" style="left:717.50px;top:247px;line-height:15px;font-size:13.8px;font-weight:700;color:#0b6cbd;letter-spacing:0.193px;">fanco.balticregion-botanic…</a>
<svg class="ico ext" style="left:918px;top:247px" width="12" height="12" viewBox="0 0 12 12"><g fill="none" stroke="#9da8ad" stroke-width="1.6"><path d="M4.1 2.9 H2.3 Q1 2.9 1 4.2 V8.7 Q1 10 2.3 10 H6.7 Q8 10 8 8.7 V7.1"/><path d="M5.1 0.8 H10.1 V5.8"/><path d="M10 0.9 L4.3 6.6"/></g></svg>
<span class="t" style="left:1003.55px;top:248px;line-height:16px;font-size:14.3px;color:#ed2d2d;">70</span>
<div class="trl" style="left:709px;top:273px;width:319px;height:1px;"></div>
<a class="t" style="left:717.50px;top:283px;line-height:15px;font-size:13.8px;font-weight:700;color:#0b6cbd;letter-spacing:0.214px;">verat.aiinglobalhealth.org/…</a>
<svg class="ico ext" style="left:918px;top:283px" width="12" height="12" viewBox="0 0 12 12"><g fill="none" stroke="#9da8ad" stroke-width="1.6"><path d="M4.1 2.9 H2.3 Q1 2.9 1 4.2 V8.7 Q1 10 2.3 10 H6.7 Q8 10 8 8.7 V7.1"/><path d="M5.1 0.8 H10.1 V5.8"/><path d="M10 0.9 L4.3 6.6"/></g></svg>
<span class="t" style="left:1003.55px;top:284px;line-height:16px;font-size:14.3px;color:#ed2d2d;">68</span>
<div class="trl" style="left:709px;top:309px;width:319px;height:1px;"></div>
</section>
<div class="fab-shadow"></div>
</main>
</body>
</html>
